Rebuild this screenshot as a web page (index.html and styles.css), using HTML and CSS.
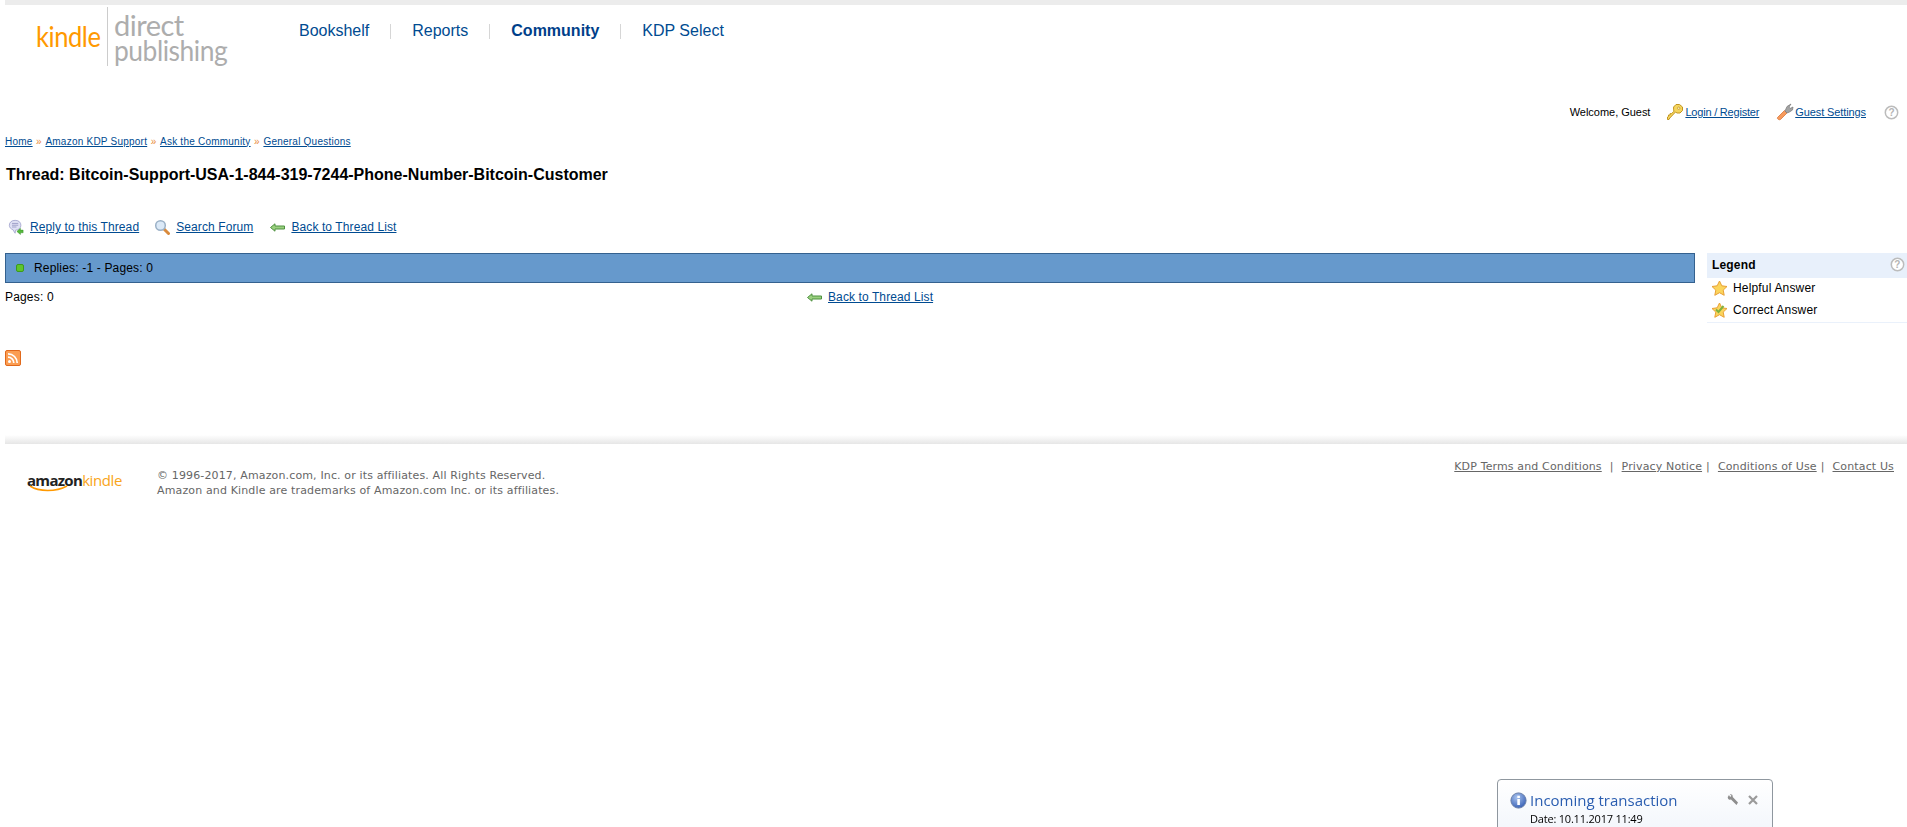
FILE: index.html
```html
<!DOCTYPE html>
<html lang="en">
<head>
<meta charset="utf-8">
<title>Thread: Bitcoin-Support-USA-1-844-319-7244-Phone-Number-Bitcoin-Customer</title>
<link rel="stylesheet" href="styles.css">
</head>
<body>
<div class="topline"></div>
<header class="masthead">
  <a class="logo" href="#">
    <span class="logo-kindle"><span>kindle</span></span>
    <span class="logo-rule"></span>
    <span class="logo-dp"><span>direct</span><span class="logo-pub">publishing</span></span>
  </a>
  <nav class="mainnav">
    <a href="#">Bookshelf</a><i></i>
    <a href="#">Reports</a><i></i>
    <a href="#" class="current">Community</a><i></i>
    <a href="#">KDP Select</a>
  </nav>
</header>

<div class="userbar">
  <span class="welcome">Welcome, Guest</span>
  <span class="useritem login">
    <svg width="18" height="18" viewBox="0 0 18 18"><path d="M10 1.500h3.500L16.500 4v3.500L14 10h-3L9.500 9 3.800 15 3 16.500H1.500V14l1-.5V12h1.600v-1.400h1.500L8 8.200 7.600 6.800V4Z" fill="#f5d55e" stroke="#c2951f"/><circle cx="12.700" cy="5.200" r="1.200" fill="#fff6c8" stroke="#b98d1e" stroke-width=".7"/></svg>
    <a href="#">Login / Register</a>
  </span>
  <span class="useritem settings">
    <svg width="18" height="18" viewBox="0 0 18 18"><path d="M1.500 14.500 8.500 7.500l2.500 2.500-6.500 6.500c-1.200.8-3.800-.5-3-2Z" fill="#f79a5c" stroke="#d8773c" stroke-width=".8"/><path d="M9 8 11 3.500 15 1l-2 3 1 1.500L17 4l-.5 3-3 2L11 10Z" fill="#a4a4a4" stroke="#777" stroke-width=".7"/></svg>
    <a href="#">Guest Settings</a>
  </span>
  <svg class="helpicon" width="15" height="15" viewBox="0 0 15 15"><circle cx="7.500" cy="7.500" r="6.200" fill="#fff" stroke="#bcbcbc" stroke-width="1.500"/><text x="7.500" y="11" text-anchor="middle" class="helpmark">?</text></svg>
</div>

<div class="crumbs">
  <a href="#">Home</a><span>»</span><a href="#">Amazon KDP Support</a><span>»</span><a href="#">Ask the Community</a><span>»</span><a href="#">General Questions</a>
</div>

<h1 class="title">Thread: Bitcoin-Support-USA-1-844-319-7244-Phone-Number-Bitcoin-Customer</h1>

<div class="actions">
  <span class="action">
    <svg width="16" height="16" viewBox="0 0 18 18"><path d="M8 1.500c4 0 6.500 2.300 6.500 5.500S12 12.500 8.500 12.500l-.5 3.500-2.500-4C3 11 1.500 9.500 1.500 7 1.500 3.800 4 1.500 8 1.500Z" fill="#dfe0f4" stroke="#a6a8d0"/><path d="M4.500 5h7M4.500 7h7M4.500 9h5" stroke="#9a9cc6"/><path d="M17 12.500h-3v-2l-4 3.500 4 3.500v-2h3Z" fill="#56b93c" stroke="#2f8a22" stroke-width=".5"/></svg>
    <a href="#">Reply to this Thread</a>
  </span>
  <span class="action">
    <svg width="16" height="16" viewBox="0 0 16 16"><path d="m9.500 9.500 5 5" stroke="#d98a3c" stroke-width="3" stroke-linecap="round"/><circle cx="6.500" cy="6.500" r="4.800" fill="#dbe9f7" stroke="#9ab0c6" stroke-width="1.500"/></svg>
    <a href="#">Search Forum</a>
  </span>
  <span class="action">
    <svg class="arrow" width="15" height="9" viewBox="0 0 15 9"><path d="M.5 4.500 5 .8v2.200h9.500v3H5v2.200Z" fill="#9ad07f" stroke="#4f9140"/></svg>
    <a href="#">Back to Thread List</a>
  </span>
</div>

<div class="content">
  <main class="threadcol">
    <div class="threadbar">
      <span class="statusdot"></span>
      <span>Replies: -1 - Pages: 0</span>
    </div>
    <div class="pagerrow">
      <span class="pagecount">Pages: 0</span>
      <span class="action pagerback">
        <svg class="arrow" width="15" height="9" viewBox="0 0 15 9"><path d="M.5 4.500 5 .8v2.200h9.500v3H5v2.200Z" fill="#9ad07f" stroke="#4f9140"/></svg>
        <a href="#">Back to Thread List</a>
      </span>
    </div>
    <a class="rss" href="#" aria-label="RSS">
      <svg width="16" height="16" viewBox="0 0 16 16"><rect x=".5" y=".5" width="15" height="15" rx="1.500" fill="#fb9d52" stroke="#e0691c"/><circle cx="4.500" cy="11.500" r="1.500" fill="#fff"/><path d="M3 7.200a5.800 5.800 0 0 1 5.800 5.800M3 3.800A9.200 9.200 0 0 1 12.200 13" fill="none" stroke="#fff" stroke-width="1.700"/></svg>
    </a>
  </main>
  <aside class="legend">
    <div class="legend-head">
      <strong>Legend</strong>
      <svg width="15" height="15" viewBox="0 0 15 15"><circle cx="7.500" cy="7.500" r="6.200" fill="#fff" stroke="#bcbcbc" stroke-width="1.500"/><text x="7.500" y="11" text-anchor="middle" class="helpmark">?</text></svg>
    </div>
    <div class="legend-row">
      <svg width="17" height="17" viewBox="0 0 17 17"><path d="m8.500 1 2.300 4.800 5.200.7-3.800 3.600 1 5.200-4.700-2.600-4.700 2.600 1-5.200L1 6.500l5.200-.7Z" fill="#fbd55c" stroke="#e8a035"/></svg>
      <span>Helpful Answer</span>
    </div>
    <div class="legend-row">
      <svg width="17" height="17" viewBox="0 0 17 17"><path d="m8.500 1 2.300 4.800 5.200.7-3.800 3.600 1 5.200-4.700-2.600-4.700 2.600 1-5.200L1 6.500l5.200-.7Z" fill="#fbd55c" stroke="#e8a035"/><path d="m5 7.500 2.500 2.500 5-6" fill="none" stroke="#7fb13e" stroke-width="2"/></svg>
      <span>Correct Answer</span>
    </div>
  </aside>
</div>

<div class="footshade"></div>
<footer class="footer">
  <div class="footlogo">
    <span class="amz">amazon<svg width="44" height="7" viewBox="0 0 44 7"><path d="M3 1c9 6 26 6 37 0" fill="none" stroke="#f90" stroke-width="1.600"/></svg></span><span class="kin">kindle</span>
  </div>
  <p class="copy">© 1996-2017, Amazon.com, Inc. or its affiliates. All Rights Reserved.<br>Amazon and Kindle are trademarks of Amazon.com Inc. or its affiliates.</p>
  <div class="footlinks">
    <a href="#">KDP Terms and Conditions</a><span class="sep1">|</span><a href="#">Privacy Notice</a><span class="sep2">|</span><a href="#">Conditions of Use</a><span class="sep2">|</span><a href="#">Contact Us</a>
  </div>
</footer>

<div class="toast">
  <div class="toast-head">
    <svg width="17" height="17" viewBox="0 0 17 17"><defs><radialGradient id="tb" cx=".4" cy=".3" r=".8"><stop offset="0" stop-color="#a9c3ee"/><stop offset="1" stop-color="#2d57b0"/></radialGradient></defs><circle cx="8.500" cy="8.500" r="7.600" fill="url(#tb)" stroke="#6a7fa8"/><rect x="7.300" y="7" width="2.600" height="6" fill="#fff"/><rect x="7.300" y="3.700" width="2.600" height="2.300" fill="#fff"/></svg>
    <span class="toast-title">Incoming transaction</span>
    <span class="toast-tools">
      <svg width="12" height="12" viewBox="0 0 12 12"><path d="M.8 3 2 1l1 1.800 1-.3.300-1L2.800.5C4.500-.2 6 1 5.700 3L11 8.500 9.500 11 4 5.600C2.500 6 .5 5 .8 3Z" fill="#8e8e8e"/></svg>
      <svg width="10" height="10" viewBox="0 0 10 10"><path d="m1 1 8 8m0-8-8 8" stroke="#9a9a9a" stroke-width="2.200"/></svg>
    </span>
  </div>
  <div class="toast-date">Date: 10.11.2017 11:49</div>
</div>
</body>
</html>
```
FILE: styles.css
```css
* { box-sizing: border-box; }
html, body { height: 100%; }
body {
  margin: 0 0 0 5px;
  overflow: hidden;
  background: #fff;
  color: #000;
  font-family: "Liberation Sans", Arial, sans-serif;
  font-size: 12px;
}
a { color: #004b91; }
svg { display: block; flex: none; }
.helpmark { font: bold 10px "Liberation Sans", Arial, sans-serif; fill: #b4b4b4; }

.topline { height: 5px; background: #ececec; }

.masthead { display: flex; height: 74px; align-items: flex-start; }
.logo { display: flex; text-decoration: none; margin-left: 31px; width: 263px; height: 59px; margin-top: 2px; }
.logo-kindle {
  font: 400 29px/29px Lato, sans-serif;
  letter-spacing: -.5px;
  color: #f90;
  width: 71px;
  padding-top: 14px;
}
.logo-kindle span { display: block; transform: scaleX(.88); transform-origin: left; }
.logo-rule { width: 1px; background: #ccc; height: 59px; }
.logo-dp {
  display: flex;
  flex-direction: column;
  margin-left: 6px;
  font: 400 29px/25px Lato, sans-serif;
  letter-spacing: -.5px;
  color: #adadad;
  padding-top: 5px;
}
.logo-pub { transform: scaleX(.91); transform-origin: left; }
.mainnav { display: flex; align-items: center; margin-top: 17px; font-size: 16px; line-height: 18px; }
.mainnav a { color: #004b91; text-decoration: none; }
.mainnav a.current { color: #003f8a; font-weight: bold; }
.mainnav i { width: 1px; height: 15px; background: #d6d6d6; margin: 0 21px 0 21px; }

.userbar { display: flex; align-items: center; justify-content: flex-end; height: 18px; margin-top: 24px; padding-right: 8px; font-size: 11px; letter-spacing: -.03px; }
.welcome { margin-right: 16px; }
.useritem { display: flex; align-items: center; gap: 1px; }
.login { margin-right: 17px; }
.login a { letter-spacing: -.2px; }
.settings { margin-right: 18px; }
.settings a { letter-spacing: -.1px; }

.crumbs { display: flex; align-items: center; margin-top: 14px; height: 12px; font-size: 10px; letter-spacing: .23px; }
.crumbs span { color: #e98a36; margin: 0 3.500px; }

.title { margin: 19px 0 0 1px; font-size: 16px; line-height: 18px; font-weight: bold; letter-spacing: 0; }

.actions { display: flex; align-items: center; height: 18px; margin: 34px 0 0 3px; font-size: 12px; letter-spacing: .1px; }
.action { display: flex; align-items: center; }
.action a { margin-left: 6px; }
.actions .action { margin-right: 15px; }
.actions .arrow { margin-left: 2px; }

.content { display: flex; align-items: flex-start; margin-top: 17px; letter-spacing: .17px; }
.threadcol { width: 1690px; flex: none; }
.threadbar {
  display: flex;
  align-items: center;
  height: 30px;
  padding-left: 10px;
  background: #6699cc;
  border: 1px solid #34618f;
}
.statusdot {
  width: 8px;
  height: 8px;
  margin-right: 10px;
  border-radius: 2px;
  background: #5ec52c;
  border: 1px solid #3c9a1c;
}
.pagerrow { display: flex; align-items: center; height: 18px; margin-top: 5px; white-space: nowrap; }
.pagerback { margin-left: 759px; letter-spacing: .1px; }
.pagecount { width: 43px; flex: none; }
.rss { display: block; width: 16px; margin-top: 44px; }

.legend { flex: 1; margin-left: 12px; border-bottom: 1px solid #eaf1fb; }
.legend-head {
  display: flex;
  align-items: center;
  justify-content: space-between;
  height: 25px;
  padding: 0 2px 2px 5px;
  background: #e8f0fb;
}
.legend-row { display: flex; align-items: center; gap: 5px; height: 22px; padding: 0 0 2px 4px; }

.footshade { height: 9px; margin-top: 69px; background: linear-gradient(#fff, #e6e6e6); }
.footer {
  display: flex;
  align-items: flex-start;
  font-family: "DejaVu Sans", Verdana, sans-serif;
  font-size: 10px;
  color: #666;
}
.footlogo { display: flex; align-items: flex-start; width: 130px; height: 30px; margin: 28px 0 0 22px; font: 15px/16px "Open Sans", sans-serif; letter-spacing: -.7px; }
.amz { color: #222; font-weight: 700; display: flex; flex-direction: column; }
.amz svg { margin-top: -3px; }
.kin { color: #f9a51a; letter-spacing: -.4px; }
.copy { margin: 24px 0 0 0; line-height: 15px; font-size: 11px; letter-spacing: .14px; }
.footlinks { display: flex; margin: 15px 13px 0 auto; line-height: 16px; font-size: 11px; letter-spacing: .14px; }
.footlinks a { color: #666; }
.sep1 { margin: 0 8px; }
.sep2 { margin: 0 8px 0 4px; }

.toast {
  position: fixed;
  left: 1497px;
  top: 779px;
  width: 276px;
  height: 60px;
  padding: 11px 12px;
  background: linear-gradient(#fff, #f1f5fb);
  border: 1px solid #8f979f;
  border-radius: 4px;
  font-family: "Open Sans", sans-serif;
}
.toast-head { display: flex; align-items: center; gap: 3px; height: 18px; }
.toast-title { color: #2a5db0; font-size: 15px; }
.toast-tools { display: flex; align-items: center; gap: 9px; margin-left: auto; margin-right: 2px; }
.toast-date { margin: 2px 0 0 20px; font-size: 11px; letter-spacing: -.2px; }
```
